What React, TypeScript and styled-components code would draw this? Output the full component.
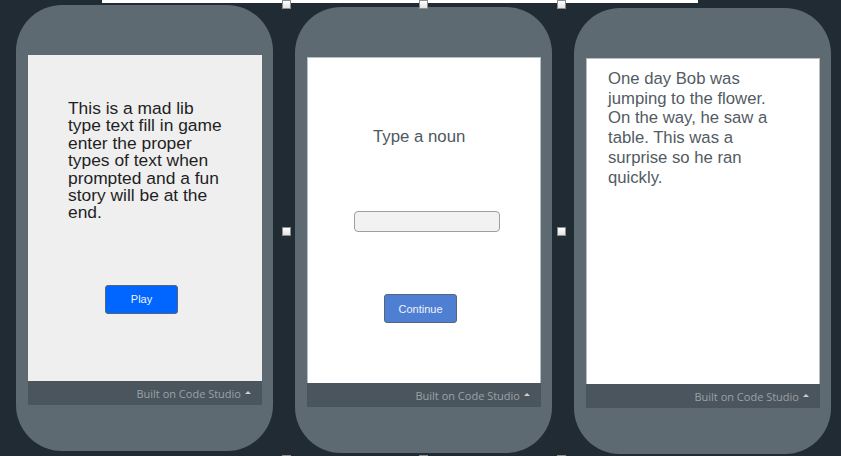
import React from 'react';
import styled, { createGlobalStyle } from 'styled-components';

const GlobalStyle = createGlobalStyle`
  html, body {
    margin: 0;
    padding: 0;
    background: #212b33;
  }
`;

const Canvas = styled.div`
  position: relative;
  width: 841px;
  height: 456px;
  overflow: hidden;
  background: #212b33;
  font-family: 'Liberation Sans', Arial, sans-serif;
`;

const TopStrip = styled.div`
  display: flex;
  height: 3px;
`;

const StripSegment = styled.div`
  margin-left: 102px;
  width: 596px;
  background: #ffffff;
`;

const PhoneRow = styled.div`
  display: flex;
  align-items: flex-start;
  gap: 22px;
  padding-left: 16px;
`;

const Phone = styled.div<{ $offset: number }>`
  box-sizing: border-box;
  width: 257px;
  height: 446px;
  margin-top: ${p => p.$offset}px;
  padding: 50px 11px 0 12px;
  border-radius: 46px;
  background: #5e6a72;
`;

const Screen = styled.div<{ $bg: string; $outlined?: boolean }>`
  box-sizing: border-box;
  display: flex;
  flex-direction: column;
  width: 234px;
  height: 326px;
  background: ${p => p.$bg};
  border: 1px solid ${p => (p.$outlined ? '#b9bec2' : p.$bg)};
  border-bottom: none;
`;

const Footer = styled.div`
  box-sizing: border-box;
  display: flex;
  align-items: center;
  justify-content: flex-end;
  gap: 4px;
  width: 234px;
  height: 24px;
  padding-right: 11px;
  background: #4b555d;
  font-family: 'Open Sans', 'Noto Sans', sans-serif;
  font-size: 11px;
  color: #9aa2a8;
`;

const Caret = styled.span`
  width: 0;
  height: 0;
  border-left: 3px solid transparent;
  border-right: 3px solid transparent;
  border-bottom: 3px solid #c9cfd3;
  margin-bottom: 1px;
`;

const IntroText = styled.div`
  width: 160px;
  margin: 44px 0 0 39px;
  font-size: 17.4px;
  line-height: 17.4px;
  color: #1f1f1f;
`;

const PromptText = styled.div`
  margin: 69px 0 0 65px;
  font-size: 16.8px;
  line-height: 19.3px;
  color: #4f5860;
`;

const StoryText = styled.div`
  width: 172px;
  margin: 10px 0 0 21px;
  font-size: 16.7px;
  line-height: 19.7px;
  color: #525b63;
`;

const TextField = styled.input`
  box-sizing: border-box;
  width: 146px;
  height: 21px;
  margin: 65px 0 0 46px;
  padding: 0 4px;
  border: 1px solid #9a9fa4;
  border-radius: 4px;
  background: #f2f2f2;
  outline: none;
`;

const ActionButton = styled.button<{ $bg: string; $top: number; $left: number }>`
  box-sizing: border-box;
  align-self: flex-start;
  width: 73px;
  height: 29px;
  margin: ${p => p.$top}px 0 0 ${p => p.$left}px;
  padding: 0;
  border: 1px solid #56657a;
  border-radius: 3px;
  background: ${p => p.$bg};
  color: #eef3ff;
  font-family: 'Liberation Sans', Arial, sans-serif;
  font-size: 11px;
  cursor: pointer;
`;

const Handle = styled.div<{ $x: number; $y: number }>`
  position: absolute;
  left: ${p => p.$x}px;
  top: ${p => p.$y}px;
  box-sizing: border-box;
  width: 9px;
  height: 9px;
  border: 1px solid #8c8c8c;
  background: linear-gradient(#ffffff, #e2e2e2);
`;

const handles = [
  [282, 0],
  [419, 0],
  [557, 0],
  [282, 227],
  [557, 227],
  [282, 455],
  [419, 455],
  [557, 455],
];

const PhoneFooter = () => (
  <Footer>
    <span>Built on Code Studio</span>
    <Caret />
  </Footer>
);

export default function App() {
  return (
    <Canvas>
      <GlobalStyle />
      <TopStrip>
        <StripSegment />
      </TopStrip>
      <PhoneRow>
        <Phone $offset={2}>
          <Screen $bg="#efefef">
            <IntroText>
              This is a mad lib type text fill in game enter the proper types of text when
              prompted and a fun story will be at the end.
            </IntroText>
            <ActionButton $bg="#0066ff" $top={63} $left={76}>
              Play
            </ActionButton>
          </Screen>
          <PhoneFooter />
        </Phone>
        <Phone $offset={4}>
          <Screen $bg="#ffffff" $outlined>
            <PromptText>Type a noun</PromptText>
            <TextField />
            <ActionButton $bg="#4f7fd3" $top={62} $left={76}>
              Continue
            </ActionButton>
          </Screen>
          <PhoneFooter />
        </Phone>
        <Phone $offset={5}>
          <Screen $bg="#ffffff" $outlined>
            <StoryText>
              One day Bob was jumping to the flower. On the way, he saw a table. This was a
              surprise so he ran quickly.
            </StoryText>
          </Screen>
          <PhoneFooter />
        </Phone>
      </PhoneRow>
      {handles.map(([x, y]) => (
        <Handle key={`${x}-${y}`} $x={x} $y={y} />
      ))}
    </Canvas>
  );
}
